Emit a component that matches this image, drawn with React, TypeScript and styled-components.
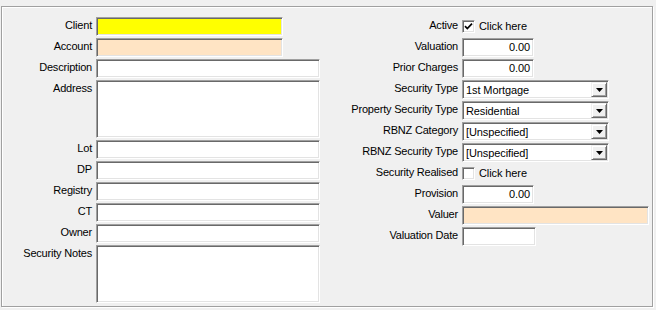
import React from "react";
import styled, { createGlobalStyle } from "styled-components";

const Global = createGlobalStyle`
  html, body { margin: 0; padding: 0; background: #f0f0f0; }
  body { font-family: "Liberation Sans", Arial, sans-serif; font-size: 11px; color: #000; }
`;

const Page = styled.div`
  padding: 6px 0 0 1px;
  width: 656px;
  height: 310px;
  box-sizing: border-box;
`;

const Frame = styled.div`
  width: 652px;
  height: 301px;
  box-sizing: border-box;
  border: 1px solid #a0a0a0;
  box-shadow: 1px 1px 0 #ffffff, inset 1px 1px 0 #ffffff;
  display: flex;
  padding-top: 10px;
`;

const Column = styled.div<{ $width: number; $label: number }>`
  width: ${(p) => p.$width}px;
  display: grid;
  grid-template-columns: ${(p) => p.$label}px auto;
  column-gap: 4px;
  row-gap: 2px;
  align-content: start;
  grid-auto-rows: min-content;
`;

const Label = styled.div`
  text-align: right;
  line-height: 13px;
  padding-top: 2px;
  letter-spacing: -0.2px;
  white-space: nowrap;
`;

const Field = styled.div<{ $w: number; $h?: number; $bg?: string; $align?: string }>`
  box-sizing: border-box;
  width: ${(p) => p.$w}px;
  height: ${(p) => p.$h ?? 19}px;
  background: ${(p) => p.$bg ?? "#ffffff"};
  border: 1px solid;
  border-color: #a0a0a0 #ffffff #ffffff #a0a0a0;
  box-shadow: inset 1px 1px 0 #696969, inset -1px -1px 0 #e3e3e3;
  text-align: ${(p) => p.$align ?? "left"};
  padding: 0 3px;
  line-height: 17px;
  letter-spacing: -0.1px;
`;

const Select = styled.div`
  box-sizing: border-box;
  width: 147px;
  height: 19px;
  background: #fff;
  border: 1px solid;
  border-color: #a0a0a0 #ffffff #ffffff #a0a0a0;
  box-shadow: inset 1px 1px 0 #696969, inset -1px -1px 0 #e3e3e3;
  display: flex;
  align-items: stretch;
  padding: 1px;
`;

const SelectText = styled.div`
  flex: 1;
  padding-left: 2px;
  line-height: 16px;
  letter-spacing: -0.1px;
`;

const DropButton = styled.div`
  width: 16px;
  box-sizing: border-box;
  background: #f0f0f0;
  border: 1px solid;
  border-color: #f0f0f0 #696969 #696969 #f0f0f0;
  box-shadow: inset 1px 1px 0 #ffffff, inset -1px -1px 0 #a0a0a0;
  display: flex;
  align-items: center;
  justify-content: center;
`;

const CheckRow = styled.div`
  display: flex;
  align-items: flex-start;
  padding-top: 3px;
  height: 19px;
  box-sizing: border-box;
`;

const CheckBox = styled.div`
  width: 13px;
  height: 13px;
  box-sizing: border-box;
  background: #fff;
  border: 1px solid;
  border-color: #a0a0a0 #ffffff #ffffff #a0a0a0;
  box-shadow: inset 1px 1px 0 #696969, inset -1px -1px 0 #e3e3e3;
  display: flex;
  align-items: center;
  justify-content: center;
`;

const CheckText = styled.span`
  margin-left: 4px;
  line-height: 13px;
  letter-spacing: -0.1px;
`;

const Arrow = () => (
  <svg width="7" height="4" viewBox="0 0 7 4">
    <path d="M0 0 H7 L3.5 4 Z" fill="#000" />
  </svg>
);

const Tick = () => (
  <svg width="9" height="9" viewBox="0 0 9 9">
    <path d="M1 4.2 L3.3 6.6 L8 1.6" fill="none" stroke="#000" strokeWidth="1.7" />
  </svg>
);

const Combo = ({ value }: { value: string }) => (
  <Select>
    <SelectText>{value}</SelectText>
    <DropButton>
      <Arrow />
    </DropButton>
  </Select>
);

const Check = ({ checked }: { checked: boolean }) => (
  <CheckRow>
    <CheckBox>{checked && <Tick />}</CheckBox>
    <CheckText>Click here</CheckText>
  </CheckRow>
);

export default function App() {
  return (
    <Page>
      <Global />
      <Frame>
        <Column $width={328} $label={90}>
          <Label>Client</Label>
          <Field $w={187} $bg="#ffff00" />
          <Label>Account</Label>
          <Field $w={187} $bg="#ffe4c4" />
          <Label>Description</Label>
          <Field $w={224} />
          <Label>Address</Label>
          <Field $w={224} $h={58} />
          <Label>Lot</Label>
          <Field $w={224} />
          <Label>DP</Label>
          <Field $w={224} />
          <Label>Registry</Label>
          <Field $w={224} />
          <Label>CT</Label>
          <Field $w={224} />
          <Label>Owner</Label>
          <Field $w={224} />
          <Label>Security Notes</Label>
          <Field $w={224} $h={58} />
        </Column>
        <Column $width={322} $label={128}>
          <Label>Active</Label>
          <Check checked />
          <Label>Valuation</Label>
          <Field $w={72} $align="right">0.00</Field>
          <Label>Prior Charges</Label>
          <Field $w={72} $align="right">0.00</Field>
          <Label>Security Type</Label>
          <Combo value="1st Mortgage" />
          <Label>Property Security Type</Label>
          <Combo value="Residential" />
          <Label>RBNZ Category</Label>
          <Combo value="[Unspecified]" />
          <Label>RBNZ Security Type</Label>
          <Combo value="[Unspecified]" />
          <Label>Security Realised</Label>
          <Check checked={false} />
          <Label>Provision</Label>
          <Field $w={72} $align="right">0.00</Field>
          <Label>Valuer</Label>
          <Field $w={187} $bg="#ffe4c4" />
          <Label>Valuation Date</Label>
          <Field $w={74} />
        </Column>
      </Frame>
    </Page>
  );
}
